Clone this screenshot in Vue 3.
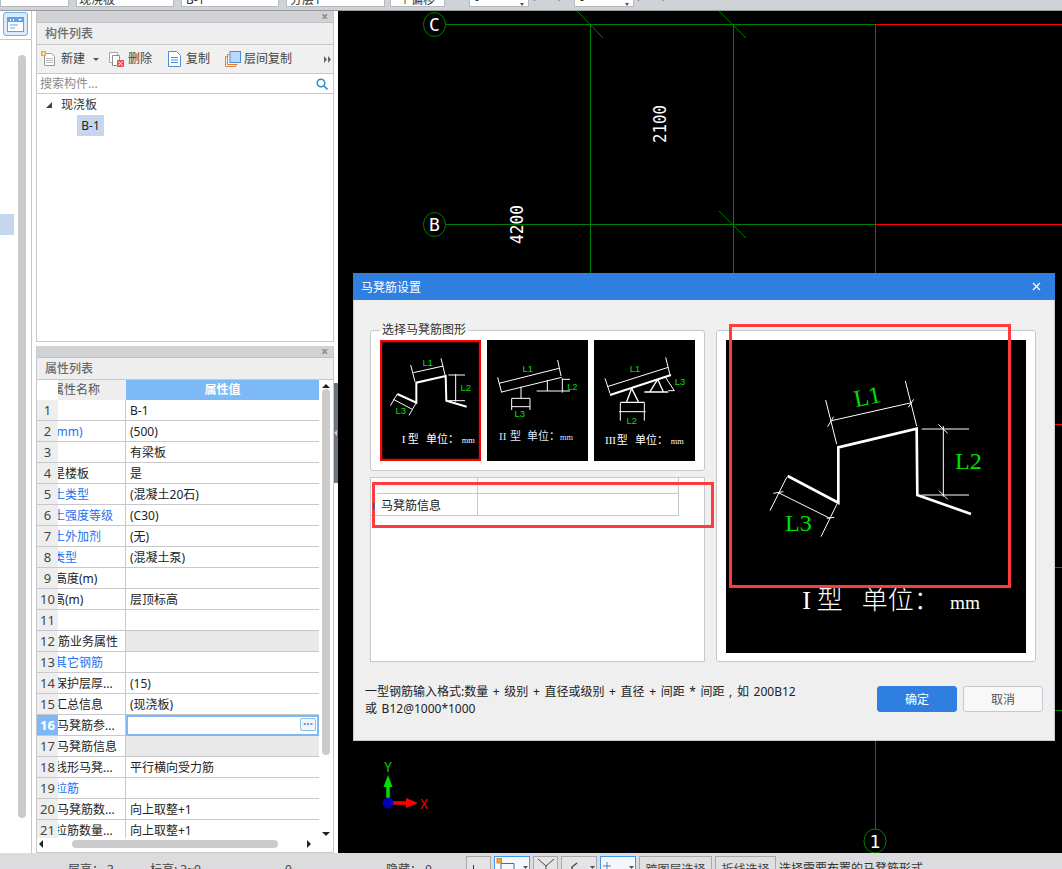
<template>
  <div class="app">
    <header class="topbar">
      <div
        v-for="f in topFields"
        :key="f.x"
        class="top-field"
        :class="{ plain: f.plain }"
        :style="{ width: f.w + 'px', marginLeft: f.gap + 'px', paddingLeft: f.pad + 'px' }"
      >
        {{ f.text }}
        <i v-if="f.caret" class="top-caret"></i>
      </div>
    </header>

    <div class="main">
      <aside class="rail">
        <div class="rail-top">
          <button class="rail-btn">
            <svg width="17" height="15" viewBox="0 0 17 15">
              <rect x="0" y="0" width="17" height="15" fill="#5aa2ee" />
              <rect x="1" y="5" width="15" height="9" fill="#fff" />
              <path d="M3 2h1v2H3zM6 2h1v2H6zM11 2h4l-2 2z" fill="#fff" />
              <path d="M3 8h8M3 11h5" stroke="#5aa2ee" />
            </svg>
          </button>
        </div>
        <div class="rail-body">
          <div class="rail-sel"></div>
          <div class="rail-scroll"></div>
        </div>
      </aside>

      <div class="panels">
        <section class="panel list-panel">
          <div class="panel-grip"><span>×</span></div>
          <div class="panel-title">构件列表</div>
          <div class="tools">
            <span class="tool tool-new">
              <svg width="15" height="16" viewBox="0 0 15 16">
                <path d="M3.5 2.5h7l3 3v9h-10z" fill="#fff" stroke="#9a9a9a" />
                <path d="M5 7.5h7M5 9.5h7M5 11.5h7" stroke="#b9b9b9" />
                <rect x="0" y="0" width="5" height="5" fill="#f6a63c" />
                <rect x="1.5" y="1.5" width="2" height="2" fill="#fff" />
              </svg>
              新建<i class="caret"></i>
            </span>
            <span class="tool tool-del">
              <svg width="16" height="16" viewBox="0 0 16 16">
                <path d="M0.5 1.5h8v10h-8z" fill="#fff" stroke="#a8a8a8" />
                <path d="M3.5 4.5h7v10h-7z" fill="#fff" stroke="#8f8f8f" />
                <rect x="8" y="9" width="7" height="7" fill="#e0575b" />
                <path d="M9.5 10.5l4 4M13.5 10.5l-4 4" stroke="#fff" />
              </svg>
              删除
            </span>
            <span class="tool tool-copy">
              <svg width="13" height="16" viewBox="0 0 13 16">
                <path d="M0.5 0.5h8l4 4v11H0.5z" fill="#fff" stroke="#4f8fd0" />
                <path d="M3 6.5h7M3 9h7M3 11.5h7" stroke="#4f8fd0" />
              </svg>
              复制
            </span>
            <span class="tool tool-floor">
              <svg width="16" height="16" viewBox="0 0 16 16">
                <path d="M0.5 15.5v-10h2M0.5 15.5h10v-2M2.5 13.5v-10h2M2.5 13.5h10" fill="none" stroke="#e2823a" />
                <rect x="5" y="0.5" width="10.5" height="11" fill="#bcd8f8" stroke="#4f8fd0" />
              </svg>
              层间复制
            </span>
            <span class="tool-more">
              <svg width="8" height="7" viewBox="0 0 8 7"><path d="M0 0l3 3.5L0 7zM4 0l3 3.5L4 7z" fill="#666" /></svg>
            </span>
          </div>
          <div class="search">
            <span class="placeholder">搜索构件...</span>
            <svg width="12" height="12" viewBox="0 0 12 12">
              <circle cx="5" cy="5" r="3.8" fill="none" stroke="#2b8fc6" stroke-width="1.5" />
              <path d="M8 8l3.5 3.5" stroke="#2b8fc6" stroke-width="1.6" />
            </svg>
          </div>
          <div class="tree">
            <div class="tree-root"><i class="tree-arrow"></i>现浇板</div>
            <div class="tree-leaf"><span>B-1</span></div>
          </div>
        </section>

        <section class="panel prop-panel">
          <div class="panel-grip"><span>×</span></div>
          <div class="panel-title">属性列表</div>
          <div class="prop-wrap">
            <div class="prop-table">
              <div class="prop-row prop-head">
                <div class="cell-no"></div>
                <div class="cell-name"><span class="head-name">属性名称</span></div>
                <div class="cell-value">属性值</div>
              </div>
              <div
                v-for="(row, i) in rows"
                :key="i"
                class="prop-row"
                :class="{ active: row.active, group: row.group }"
              >
                <div class="cell-no">{{ i + 1 }}</div>
                <div class="cell-name">
                  <span :class="{ link: row.link }" :style="{ marginLeft: row.shift + 'px' }">{{ row.name }}</span>
                </div>
                <div class="cell-value">
                  {{ row.value }}
                  <span v-if="row.active" class="dots">···</span>
                </div>
              </div>
            </div>
            <div class="vscroll">
              <i class="arrow-up"></i>
              <div class="vthumb"></div>
              <i class="arrow-down"></i>
            </div>
          </div>
          <div class="hscroll">
            <i class="arrow-left"></i>
            <div class="hthumb"></div>
            <i class="arrow-right"></i>
          </div>
        </section>
      </div>

      <div class="splitter"><div class="handle"><i></i></div></div>

      <div class="canvas">
        <svg class="cad" width="724" height="842" viewBox="338 11 724 842">
          <g stroke="#008000" fill="none" shape-rendering="crispEdges">
            <path d="M446 24.5H875M446 224.5H875" />
            <path d="M590.5 24V300M733.5 24V300" />
            <path d="M875.5 741V830M1055 567.5h7M1055 710.5h7" />
          </g>
          <g stroke="#008000" fill="none">
            <path d="M577 11L603 38M719 11L746 38M719 211L746 238" />
            <ellipse cx="434.5" cy="24.5" rx="11" ry="12" />
            <ellipse cx="434.5" cy="224.5" rx="11" ry="12" />
            <ellipse cx="875" cy="841" rx="11" ry="12" />
          </g>
          <g stroke="#ff0000" fill="none" shape-rendering="crispEdges">
            <path d="M875 24.5H1062M875 224.5H1062M875.5 24V280M1055 424.5h7" />
          </g>
          <text x="434.5" y="31" class="cad-label">C</text>
          <text x="434.5" y="231" class="cad-label">B</text>
          <text x="875" y="848" class="cad-label">1</text>
          <text transform="translate(666 143) rotate(-90)" class="cad-dim" textLength="38" lengthAdjust="spacingAndGlyphs">2100</text>
          <text transform="translate(523 244) rotate(-90)" class="cad-dim" textLength="39" lengthAdjust="spacingAndGlyphs">4200</text>

          <path d="M388 803V785" stroke="#00e000" stroke-width="3.5" />
          <path d="M388 775l-4.5 12h9z" fill="#00e000" />
          <path d="M388 803h20" stroke="#ff0000" stroke-width="3.5" />
          <path d="M418 803l-12-5v10z" fill="#ff0000" />
          <circle cx="388" cy="803" r="5.5" fill="#0000b0" />
          <text x="388" y="772" class="axis axis-y" textLength="8" lengthAdjust="spacingAndGlyphs">Y</text>
          <text x="424" y="809" class="axis axis-x" textLength="8" lengthAdjust="spacingAndGlyphs">X</text>
        </svg>
      </div>
    </div>

    <footer class="statusbar">
      <span class="st st-a">层高： 3</span>
      <span class="st st-b">标高: 3~0</span>
      <span class="st st-c">0</span>
      <span class="st st-d">隐藏： 0</span>
      <span class="snap s1"><svg width="24" height="14"><path d="M6.5 8v7" stroke="#333" /></svg></span>
      <span class="snap s2 on">
        <svg width="34" height="14">
          <path d="M6 6.5h13v9M6 6.5v9" fill="none" stroke="#3a6ea8" />
          <rect x="2" y="1.5" width="4.5" height="4.5" fill="#f6a63c" stroke="#d9822b" />
          <path d="M28 9h5l-2.5 3z" fill="#555" />
        </svg>
      </span>
      <span class="snap s3"><svg width="24" height="14"><path d="M4 2l8 7 8-7M12 9v6" fill="none" stroke="#444" /></svg></span>
      <span class="snap s4">
        <svg width="35" height="14"><path d="M10 15v-5l5-4" fill="none" stroke="#444" stroke-width="1.4" /><path d="M28 9h5l-2.5 3z" fill="#555" /></svg>
      </span>
      <span class="snap s5 on">
        <svg width="35" height="14"><path d="M6 5v8M2 9h8" stroke="#3a84d0" /><path d="M28 9h5l-2.5 3z" fill="#555" /></svg>
      </span>
      <span class="snap-text t1">跨图层选择</span>
      <span class="snap-text t2">折线选择</span>
      <span class="hint-line">选择需要布置的马凳筋形式</span>
    </footer>

    <div class="dialog">
      <div class="dialog-title">
        <span>马凳筋设置</span>
        <svg width="9" height="9" viewBox="0 0 9 9"><path d="M1 1l7 7M8 1l-7 7" stroke="#fff" stroke-width="1.3" /></svg>
      </div>
      <div class="dialog-body">
        <div class="dialog-left">
          <div class="shape-group">
            <span class="legend">选择马凳筋图形</span>
            <svg class="thumb" width="101" height="121" viewBox="75 210 303 363">
              <rect x="75" y="210" width="303" height="363" fill="#000" />
              <rect x="78" y="213" width="297" height="357" fill="none" stroke="#f00" stroke-width="7" />
              <path d="M127 372L184 398V338L272 318L274 392L335 410" class="thick" stroke-width="6" />
              <path d="M167 285L180 335M258 265L270 315M175 308L265 288M280 315H330M280 392H330M302 312V395M127 372L106 407M184 398L162 436M115 388L172 418" class="thin" />
              <text x="218" y="289" class="mark">L1</text>
              <text x="332" y="362" class="mark">L2</text>
              <text x="137" y="432" class="mark">L3</text>
              <text y="520" class="cap"><tspan x="140">I</tspan><tspan x="158">型</tspan><tspan x="213">单位：</tspan><tspan x="320" class="cap-unit">mm</tspan></text>
            </svg>
            <svg class="thumb" width="101" height="121" viewBox="396 210 303 363">
              <rect x="396" y="210" width="303" height="363" fill="#000" />
              <path d="M428 322L440 368M608 270L618 318M432 340L612 295M440 366L620 322M498 350V385M470 385H525M470 385V420M525 385V420M470 410H525M577 330V363M545 363H620M620 328H645M620 363H645M622 325V368" class="thin" />
              <text x="518" y="307" class="mark">L1</text>
              <text x="652" y="360" class="mark">L2</text>
              <text x="494" y="441" class="mark">L3</text>
              <text y="511" class="cap cap-blue"><tspan x="432">II</tspan><tspan x="465">型</tspan><tspan x="516">单位：</tspan><tspan x="615" class="cap-unit">mm</tspan></text>
            </svg>
            <svg class="thumb" width="101" height="121" viewBox="717 210 303 363">
              <rect x="717" y="210" width="303" height="363" fill="#000" />
              <path d="M765 375L948 315" class="thick" stroke-width="6" />
              <path d="M830 355L815 395M830 355L850 395M797 397H868M908 328L885 365M908 328L925 365M868 366H940" class="thick" stroke-width="4" />
              <path d="M750 325L765 370M932 262L945 315M757 350L940 292M796 397V452M868 397V452M792 425H872M930 320L958 362M940 362H958" class="thin" />
              <text x="840" y="306" class="mark">L1</text>
              <text x="830" y="461" class="mark">L2</text>
              <text x="975" y="344" class="mark">L3</text>
              <text y="523" class="cap"><tspan x="750">III</tspan><tspan x="785">型</tspan><tspan x="840">单位：</tspan><tspan x="947" class="cap-unit">mm</tspan></text>
            </svg>
          </div>
          <div class="spec-box">
            <div class="spec-row spec-blank">
              <div class="spec-cell"></div>
              <div class="spec-cell"></div>
            </div>
            <div class="spec-row spec-text">
              <div class="spec-cell"><i class="spec-tick"></i>马凳筋信息</div>
              <div class="spec-cell"></div>
            </div>
          </div>
        </div>
        <div class="preview">
          <svg width="300" height="313" viewBox="33 60 900 939">
            <rect x="33" y="60" width="900" height="939" fill="#000" />
            <path d="M218 468L370 548V382L605 326L607 525L768 582" class="thick" stroke-width="8" />
            <path d="M332 240L365 372M571 183L605 318M350 302L590 248M338 320L356 290M580 262L596 238M620 327H762M620 525H762M685 318V530M670 313L698 340M672 512L698 538M215 472L165 572M366 552L318 650M190 518L345 595M175 520L205 515M335 595L358 592" class="thin" />
            <text x="457" y="254" class="big-mark" transform="rotate(-12 457 232)">L1</text>
            <text x="760" y="447" class="big-mark">L2</text>
            <text x="250" y="632" class="big-mark">L3</text>
            <text y="868" class="big-cap"><tspan x="262">I</tspan><tspan x="305">型</tspan><tspan x="440">单位：</tspan><tspan x="705" class="big-unit">mm</tspan></text>
          </svg>
        </div>
      </div>
      <div class="dialog-foot">
        <p class="format">
          一型钢筋输入格式:数量 + 级别 + 直径或级别 + 直径 + 间距 * 间距 , 如 200B12<br />或 B12@1000*1000
        </p>
        <div class="actions">
          <button class="btn btn-primary">确定</button>
          <button class="btn">取消</button>
        </div>
      </div>
      <div class="mark-box mark-list"></div>
      <div class="mark-box mark-preview"></div>
    </div>
  </div>
</template>

<script setup>
const topFields = [
  { x: 0, w: 69, gap: 0, pad: 3, text: '' },
  { x: 76, w: 98, gap: 7, pad: 2, text: '现浇板' },
  { x: 181, w: 98, gap: 7, pad: 4, text: 'B-1' },
  { x: 286, w: 99, gap: 7, pad: 3, text: '分层1' },
  { x: 390, w: 55, gap: 5, pad: 8, text: '↑偏移' },
  { x: 446, w: 23, gap: 1, pad: 2, text: '米', plain: true },
  { x: 469, w: 60, gap: 0, pad: 5, text: '-', caret: true },
  { x: 530, w: 44, gap: 1, pad: 2, text: '(mm) +', plain: true },
  { x: 574, w: 60, gap: 0, pad: 5, text: '-', caret: true },
  { x: 635, w: 30, gap: 1, pad: 1, text: '(mm)', plain: true },
]

const rows = [
  { name: '名称', value: 'B-1', shift: -29 },
  { name: '厚度(mm)', value: '(500)', shift: -29, link: true },
  { name: '类别', value: '有梁板', shift: -29 },
  { name: '是否是楼板', value: '是', shift: -29 },
  { name: '混凝土类型', value: '(混凝土20石)', shift: -29, link: true },
  { name: '混凝土强度等级', value: '(C30)', shift: -29, link: true },
  { name: '混凝土外加剂', value: '(无)', shift: -29, link: true },
  { name: '泵送类型', value: '(混凝土泵)', shift: -29, link: true },
  { name: '泵送高度(m)', value: '', shift: -27 },
  { name: '顶标高(m)', value: '层顶标高', shift: -29 },
  { name: '备注', value: '', shift: -29 },
  { name: '钢筋业务属性', value: '', shift: -12, group: true },
  { name: '其它钢筋', value: '', shift: -3, link: true },
  { name: '保护层厚...', value: '(15)', shift: -3 },
  { name: '汇总信息', value: '(现浇板)', shift: -3 },
  { name: '马凳筋参...', value: '', shift: -1, active: true },
  { name: '马凳筋信息', value: '', shift: -1, group: true },
  { name: '线形马凳...', value: '平行横向受力筋', shift: -3 },
  { name: '拉筋', value: '', shift: -3, link: true },
  { name: '马凳筋数...', value: '向上取整+1', shift: -1 },
  { name: '拉筋数量...', value: '向上取整+1', shift: -3 },
]
</script>

<style>
html,
body {
  margin: 0;
  background: #fff;
}
</style>

<style scoped>
.app {
  position: relative;
  display: flex;
  flex-direction: column;
  width: 1062px;
  height: 869px;
  overflow: hidden;
  font-family: "Noto Sans", "Noto Sans CJK SC", sans-serif;
  font-size: 12px;
  color: #222;
  background: #fff;
}

.topbar {
  display: flex;
  flex: 0 0 11px;
  box-sizing: border-box;
  height: 11px;
  overflow: hidden;
  background: #cfd2d6;
  border-bottom: 1px solid #9a9a9a;
}

.top-field {
  position: relative;
  flex: none;
  box-sizing: border-box;
  height: 16px;
  margin-top: -9px;
  line-height: 16px;
  white-space: nowrap;
  background: #fff;
  border: 1px solid #b6b9bd;
  color: #333;
}

.top-field.plain {
  margin-top: -13px;
  overflow: hidden;
  color: #777;
  background: transparent;
  border: 0;
}

.top-caret {
  position: absolute;
  right: 4px;
  top: 11px;
  width: 0;
  height: 0;
  border-left: 2px solid transparent;
  border-right: 2px solid transparent;
  border-top: 3px solid #555;
}

.main {
  display: flex;
  flex: 1;
  min-height: 0;
}

.rail {
  display: flex;
  flex-direction: column;
  flex: 0 0 32px;
  box-sizing: border-box;
  border-right: 1px solid #c8c8cc;
}

.rail-top {
  flex: 0 0 27px;
  padding-top: 1px;
  border-bottom: 1px solid #c8c8cc;
}

.rail-btn {
  display: flex;
  align-items: center;
  justify-content: center;
  box-sizing: border-box;
  width: 25px;
  height: 24px;
  margin: 0 0 0 3px;
  padding: 0;
  background: #dcebfb;
  border: 1px solid #6fb0f2;
  border-radius: 3px;
}

.rail-body {
  position: relative;
  flex: 1;
}

.rail-sel {
  position: absolute;
  left: 0;
  top: 174px;
  width: 14px;
  height: 21px;
  background: #c5d6ee;
}

.rail-scroll {
  position: absolute;
  left: 18px;
  top: 15px;
  width: 8px;
  height: 763px;
  background: #cbcbcb;
  border-radius: 4px;
}

.panels {
  display: flex;
  flex-direction: column;
  flex: 0 0 298px;
  gap: 4px;
  margin-left: 4px;
  padding-bottom: 0;
}

.panel {
  display: flex;
  flex-direction: column;
  box-sizing: border-box;
  background: #fff;
  border: 1px solid #c8c8cc;
  border-top: 0;
}

.list-panel {
  flex: 0 0 331px;
}

.prop-panel {
  flex: 0 0 507px;
}

.panel-grip {
  flex: 0 0 12px;
  box-sizing: border-box;
  padding-right: 5px;
  text-align: right;
  font-size: 12px;
  line-height: 11px;
  font-weight: 700;
  color: #888;
  background: #d0d2d6;
  border-bottom: 1px solid #bfc1c5;
}

.panel-title {
  flex: 0 0 21px;
  padding-left: 8px;
  line-height: 21px;
  font-size: 12px;
  font-weight: 500;
  color: #6b6b6b;
  background: #eeeeee;
  border-bottom: 1px solid #c8c8cc;
}

.tools {
  display: flex;
  flex: 0 0 29px;
  align-items: center;
  box-sizing: border-box;
  padding-left: 4px;
  background: #f0f0f0;
  border-bottom: 1px solid #c8c8cc;
  color: #444;
}

.tool {
  display: flex;
  align-items: center;
  gap: 4px;
  line-height: 16px;
}

.tool-del {
  margin-left: 10px;
  gap: 3px;
}

.tool-copy {
  margin-left: 16px;
  gap: 5px;
}

.tool-floor {
  margin-left: 15px;
  gap: 3px;
}

.tool-new {
  gap: 5px;
}

.caret {
  width: 0;
  height: 0;
  margin-left: 3px;
  border-left: 3px solid transparent;
  border-right: 3px solid transparent;
  border-top: 3px solid #555;
}

.tool-more {
  display: flex;
  margin-left: auto;
  padding-right: 1px;
}

.search {
  display: flex;
  flex: 0 0 19px;
  align-items: center;
  justify-content: space-between;
  padding: 0 5px 0 3px;
  border-bottom: 1px solid #c8c8cc;
  line-height: 18px;
}

.placeholder {
  color: #8a8a8a;
}

.tree {
  flex: 1;
  padding-top: 1px;
}

.tree-root {
  display: flex;
  align-items: center;
  height: 20px;
  padding-left: 9px;
  line-height: 20px;
  color: #333;
}

.tree-arrow {
  width: 0;
  height: 0;
  margin-right: 9px;
  border-left: 6px solid transparent;
  border-bottom: 6px solid #444;
}

.tree-leaf {
  padding-left: 40px;
}

.tree-leaf span {
  display: inline-block;
  width: 27px;
  height: 21px;
  line-height: 21px;
  text-align: center;
  background: #c5d6ee;
}

.prop-wrap {
  display: flex;
  flex: 0 0 458px;
  height: 458px;
  overflow: hidden;
}

.prop-table {
  flex: 0 0 282px;
  overflow: hidden;
}

.prop-row {
  display: flex;
  box-sizing: border-box;
  height: 21px;
  line-height: 21px;
  border-bottom: 1px solid #c8c8cc;
}

.prop-head {
  height: 20px;
  line-height: 19px;
  border-bottom: 0;
}

.cell-no {
  flex: 0 0 21px;
  font-size: 13px;
  text-align: center;
  color: #444;
  background: #eee;
}

.prop-head .cell-no {
  background: #fff;
}

.cell-name {
  flex: 0 0 68px;
  box-sizing: border-box;
  overflow: hidden;
  white-space: nowrap;
  color: #222;
  border-right: 1px solid #c8c8cc;
}

.prop-head .cell-name {
  color: #555;
  background: #eee;
  border-right: 0;
}

.head-name {
  margin-left: -6px;
}

.cell-name span {
  display: inline-block;
}

.link {
  color: #1f6ff0;
}

.cell-value {
  position: relative;
  flex: 1;
  padding-left: 4px;
  white-space: nowrap;
  color: #222;
}

.prop-head .cell-value {
  padding: 0;
  text-align: center;
  font-weight: 700;
  color: #fff;
  background: #7db8f7;
}

.group .cell-value {
  background: #e9e9e9;
}

.active .cell-no {
  font-weight: 700;
  color: #fff;
  background: #7db8f7;
}

.active .cell-value {
  box-sizing: border-box;
  border: 2px solid #7db8f7;
  height: 21px;
  margin-top: 0;
}

.dots {
  position: absolute;
  right: 1px;
  top: 1px;
  box-sizing: border-box;
  width: 16px;
  height: 13px;
  line-height: 10px;
  text-align: center;
  font-weight: 700;
  color: #6a8fb8;
  background: #eef5fc;
  border: 1px solid #8fbdea;
  border-radius: 2px;
}

.vscroll {
  display: flex;
  flex-direction: column;
  flex: 0 0 14px;
  align-items: center;
  padding-top: 4px;
  background: #fff;
}

.arrow-up {
  width: 0;
  height: 0;
  border-left: 4px solid transparent;
  border-right: 4px solid transparent;
  border-bottom: 4px solid #222;
}

.arrow-down {
  width: 0;
  height: 0;
  margin-top: 77px;
  border-left: 4px solid transparent;
  border-right: 4px solid transparent;
  border-top: 4px solid #222;
}

.vthumb {
  flex: none;
  width: 8px;
  height: 366px;
  margin-top: 1px;
  background: #cbcbcb;
  border-radius: 4px;
}

.hscroll {
  display: flex;
  flex: 1;
  align-items: flex-start;
  padding-top: 2px;
}

.arrow-left {
  width: 0;
  height: 0;
  margin: 0 0 0 2px;
  border-top: 4px solid transparent;
  border-bottom: 4px solid transparent;
  border-right: 4px solid #222;
}

.arrow-right {
  width: 0;
  height: 0;
  margin-left: 29px;
  margin-top: 0;
  border-top: 4px solid transparent;
  border-bottom: 4px solid transparent;
  border-left: 4px solid #222;
}

.hthumb {
  width: 206px;
  height: 8px;
  margin-left: 29px;
  background: #cbcbcb;
  border-radius: 4px;
}

.splitter {
  flex: 0 0 4px;
  display: flex;
  align-items: flex-start;
  margin-left: 0;
}

.handle {
  display: flex;
  align-items: center;
  width: 4px;
  height: 100px;
  margin-top: 372px;
  background: #6b7680;
}

.handle i {
  width: 0;
  height: 0;
  border-top: 3px solid transparent;
  border-bottom: 3px solid transparent;
  border-right: 3px solid #c8c8cc;
}

.canvas {
  flex: 1;
  overflow: hidden;
  background: #000;
}

.cad {
  display: block;
}

.cad-label {
  fill: #fff;
  font-family: "DejaVu Sans Mono", monospace;
  font-size: 18px;
  text-anchor: middle;
}

.cad-dim {
  fill: #fff;
  font-family: "DejaVu Sans Mono", monospace;
  font-size: 18px;
}

.axis {
  font-family: "Liberation Sans", sans-serif;
  font-size: 14px;
  text-anchor: middle;
}

.axis-y {
  fill: #00e000;
}

.axis-x {
  fill: #ff0000;
}

.statusbar {
  display: flex;
  flex: 0 0 16px;
  position: relative;
  overflow: hidden;
  background: #dcdcde;
  color: #444;
  height: 16px;
}

.st {
  flex: none;
  padding-top: 8px;
  line-height: 18px;
}

.st-a {
  margin-left: 68px;
  width: 82px;
}

.st-b {
  width: 135px;
}

.st-c {
  width: 101px;
}

.st-d {
  width: 80px;
}

.snap {
  flex: none;
  box-sizing: border-box;
  height: 18px;
  margin-top: 3px;
  margin-right: 3px;
  background: #e4e4e6;
  border: 1px solid #a8a8ac;
}

.snap svg {
  display: block;
}

.snap.on {
  background: #f4f8fd;
  border-color: #3f97f0;
}

.s1 {
  width: 25px;
}

.s2 {
  width: 36px;
}

.s3 {
  width: 25px;
}

.s4 {
  width: 36px;
}

.s5 {
  width: 36px;
}

.snap-text {
  flex: none;
  box-sizing: border-box;
  height: 20px;
  margin-top: 3px;
  margin-right: 3px;
  padding-top: 5px;
  text-align: center;
  line-height: 16px;
  color: #444;
  background: #e0e0e2;
  border: 1px solid #a8a8ac;
}

.t1 {
  width: 73px;
}

.t2 {
  width: 61px;
}

.hint-line {
  flex: none;
  padding-top: 8px;
  line-height: 16px;
  color: #333;
}

.dialog {
  position: absolute;
  left: 353px;
  top: 273px;
  box-sizing: border-box;
  width: 702px;
  height: 468px;
  background: #efefef;
  border: 1px solid #c4c8d0;
  border-top: 0;
}

.dialog-title {
  display: flex;
  align-items: center;
  justify-content: space-between;
  height: 27px;
  margin: 0 -1px;
  padding: 0 14px 0 8px;
  font-size: 12px;
  color: #fff;
  background: #2e7fe0;
}

.dialog-body {
  display: flex;
  gap: 11px;
  padding: 30px 0 0 16px;
}

.dialog-left {
  display: flex;
  flex-direction: column;
  gap: 6px;
  width: 335px;
}

.shape-group {
  position: relative;
  display: flex;
  gap: 6px;
  box-sizing: border-box;
  height: 141px;
  padding: 9px 0 0 9px;
  background: #fff;
  border: 1px solid #c8c8cc;
  border-radius: 3px;
}

.legend {
  position: absolute;
  left: 9px;
  top: -8px;
  padding: 0 2px;
  line-height: 14px;
  color: #333;
  background: linear-gradient(#efefef 50%, #fff 50%);
}

.thumb {
  display: block;
  flex: none;
}

.thick {
  fill: none;
  stroke: #fff;
}

.thin {
  fill: none;
  stroke: #fff;
  stroke-width: 3;
}

.mark {
  fill: #00e000;
  font-family: "Liberation Sans", sans-serif;
  font-size: 28px;
  text-anchor: middle;
}

.cap {
  fill: #fff;
  font-family: "Liberation Serif", "Noto Sans CJK SC", serif;
  font-size: 33px;
}

.cap-unit {
  font-size: 25px;
}

.cap-blue {
  fill: #dbe9ff;
}

.big-mark {
  fill: #00e000;
  font-family: "Liberation Serif", serif;
  font-size: 72px;
  text-anchor: middle;
}

.big-cap {
  fill: #fff;
  font-family: "Liberation Serif", "Noto Sans CJK SC", serif;
  font-size: 78px;
  font-weight: 300;
}

.big-unit {
  font-size: 58px;
}

.spec-box {
  box-sizing: border-box;
  height: 185px;
  background: #fff;
  border: 1px solid #c8c8cc;
}

.spec-row {
  display: flex;
  box-sizing: border-box;
  width: 308px;
  border-bottom: 1px solid #c4c8d0;
}

.spec-blank {
  height: 16px;
  background: #fafafa;
  margin-left: 6px;
  width: 302px;
}

.spec-blank .spec-cell:first-child {
  flex: 0 0 101px;
}

.spec-text {
  height: 22px;
  line-height: 21px;
  color: #222;
}

.spec-cell {
  flex: 1;
  box-sizing: border-box;
  border-right: 1px solid #c4c8d0;
}

.spec-text .spec-cell:first-child {
  flex: 0 0 107px;
  display: flex;
  align-items: center;
  padding-top: 2px;
}

.spec-tick {
  position: relative;
  z-index: 1;
  flex: none;
  width: 2px;
  height: 6px;
  margin: 0 6px 0 2px;
  background: #2f5f9e;
}

.preview {
  box-sizing: border-box;
  width: 320px;
  height: 332px;
  padding: 9px 0 0 9px;
  background: #fff;
  border: 1px solid #c8c8cc;
  border-radius: 3px;
}

.preview svg {
  display: block;
}

.dialog-foot {
  display: flex;
  justify-content: space-between;
  padding: 20px 11px 0 11px;
}

.format {
  margin: 0;
  padding-top: 1px;
  line-height: 17px;
  font-size: 12px;
  word-spacing: 1.5px;
  color: #222;
}

.actions {
  display: flex;
  gap: 6px;
  margin-top: 4px;
}

.btn {
  box-sizing: border-box;
  width: 80px;
  height: 26px;
  padding: 0;
  font: inherit;
  color: #555;
  background: #f8f8f8;
  border: 1px solid #c4c8d0;
  border-radius: 3px;
}

.btn-primary {
  color: #fff;
  background: #2e7fe0;
  border-color: #2e7fe0;
}

.mark-box {
  position: absolute;
  box-sizing: border-box;
  border: 3px solid #ff3b3b;
  pointer-events: none;
}

.mark-list {
  left: 18px;
  top: 209px;
  width: 342px;
  height: 46px;
}

.mark-preview {
  left: 375px;
  top: 51px;
  width: 282px;
  height: 264px;
}
</style>
